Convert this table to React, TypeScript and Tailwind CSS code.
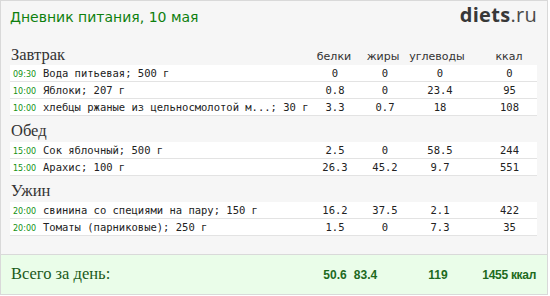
import React from "react";

type Item = { t: string; name: string; b: string; z: string; u: string; k: string };

const sections: { title: string; h: string; items: Item[] }[] = [
  {
    title: "Завтрак",
    h: "h-[25px]",
    items: [
      { t: "09:30", name: "Вода питьевая; 500 г", b: "0", z: "0", u: "0", k: "0" },
      { t: "10:00", name: "Яблоки; 207 г", b: "0.8", z: "0", u: "23.4", k: "95" },
      { t: "10:00", name: "хлебцы ржаные из цельносмолотой м...; 30 г", b: "3.3", z: "0.7", u: "18", k: "108" },
    ],
  },
  {
    title: "Обед",
    h: "h-[26px]",
    items: [
      { t: "15:00", name: "Сок яблочный; 500 г", b: "2.5", z: "0", u: "58.5", k: "244" },
      { t: "15:00", name: "Арахис; 100 г", b: "26.3", z: "45.2", u: "9.7", k: "551" },
    ],
  },
  {
    title: "Ужин",
    h: "h-[26px]",
    items: [
      { t: "20:00", name: "свинина со специями на пару; 150 г", b: "16.2", z: "37.5", u: "2.1", k: "422" },
      { t: "20:00", name: "Томаты (парниковые); 250 г", b: "1.5", z: "0", u: "7.3", k: "35" },
    ],
  },
];

const serif = { fontFamily: '"Liberation Serif", serif' };

function Cell({ children }: { children: React.ReactNode }) {
  return <div className="flex justify-center whitespace-nowrap">{children}</div>;
}

export default function App() {
  return (
    <div className="w-[548px] h-[295px] border border-[#d9d9d9] bg-[#f6f6f6] flex flex-col overflow-hidden">
      {/* header */}
      <div className="h-[39px] flex justify-between shrink-0">
        <div
          className="pl-[9px] pt-[8px] text-[14px] leading-[16px] text-[#0e800e]"
          style={{ fontFamily: '"DejaVu Sans", sans-serif' }}
        >
          Дневник питания, 10 мая
        </div>
        <div
          className="pr-[10px] pt-[4px] text-[20px] leading-[20px] tracking-[0.3px]"
          style={{ fontFamily: '"Open Sans", sans-serif' }}
        >
          <span className="font-bold text-[#383838]">diets</span>
          <span className="text-[#4a4a4a]">.ru</span>
        </div>
      </div>

      <div className="ml-[9px] mr-[10px] flex flex-col">
        {sections.map((s, si) => (
          <React.Fragment key={s.title}>
            <div
              className={`${s.h} pt-[7px] grid grid-cols-[minmax(0,1fr)_78px_20px_88px_56px] items-baseline shrink-0`}
            >
              <div className="pl-[1px] text-[16.5px] leading-[16px] text-[#333]" style={serif}>
                {s.title}
              </div>
              {si === 0 &&
                ["белки", "жиры", "углеводы", "ккал"].map((h) => (
                  <div
                    key={h}
                    className="flex justify-center whitespace-nowrap text-[11px] leading-[16px] text-[#333]"
                    style={{ fontFamily: '"DejaVu Sans", sans-serif' }}
                  >
                    {h}
                  </div>
                ))}
            </div>
            {s.items.map((it, i) => (
              <div
                key={i}
                className="h-[17px] bg-white border-b border-[#e3e3e3] grid grid-cols-[minmax(0,1fr)_74px_26px_84px_55px] items-baseline text-[10.5px] leading-[16px] text-[#222]"
                style={{ fontFamily: '"DejaVu Sans Mono", monospace' }}
              >
                <div className="min-w-0 flex items-baseline whitespace-nowrap pl-[3px]">
                  <span
                    className="w-[30px] shrink-0 text-[8px] text-[#139213]"
                    style={{ fontFamily: '"DejaVu Sans", sans-serif' }}
                  >
                    {it.t}
                  </span>
                  <span className="shrink-0">{it.name}</span>
                </div>
                <Cell>{it.b}</Cell>
                <Cell>{it.z}</Cell>
                <Cell>{it.u}</Cell>
                <Cell>{it.k}</Cell>
              </div>
            ))}
          </React.Fragment>
        ))}
      </div>

      <div className="flex-1" />

      {/* footer */}
      <div className="h-[40px] shrink-0 border-t border-[#d9d9d9] bg-[#eafde9] pl-[10px] pr-[10px] pt-[11px] flex items-baseline">
        <div className="flex-1 text-[16.5px] leading-[16px] text-[#1a5a1a]" style={serif}>
          Всего за день:
        </div>
        <div
          className="flex items-baseline font-bold text-[12px] leading-[16px] text-[#1d6a1d]"
          style={{ fontFamily: '"Liberation Sans", Arial, sans-serif' }}
        >
          <div className="w-[30px] flex justify-center">50.6</div>
          <div className="w-[31px] flex justify-center">83.4</div>
          <div className="w-[19px]" />
          <div className="w-[76px] flex justify-center">119</div>
          <div className="w-[61px] flex justify-end pr-[1px] tracking-[-0.3px]">1455 ккал</div>
        </div>
      </div>
    </div>
  );
}
